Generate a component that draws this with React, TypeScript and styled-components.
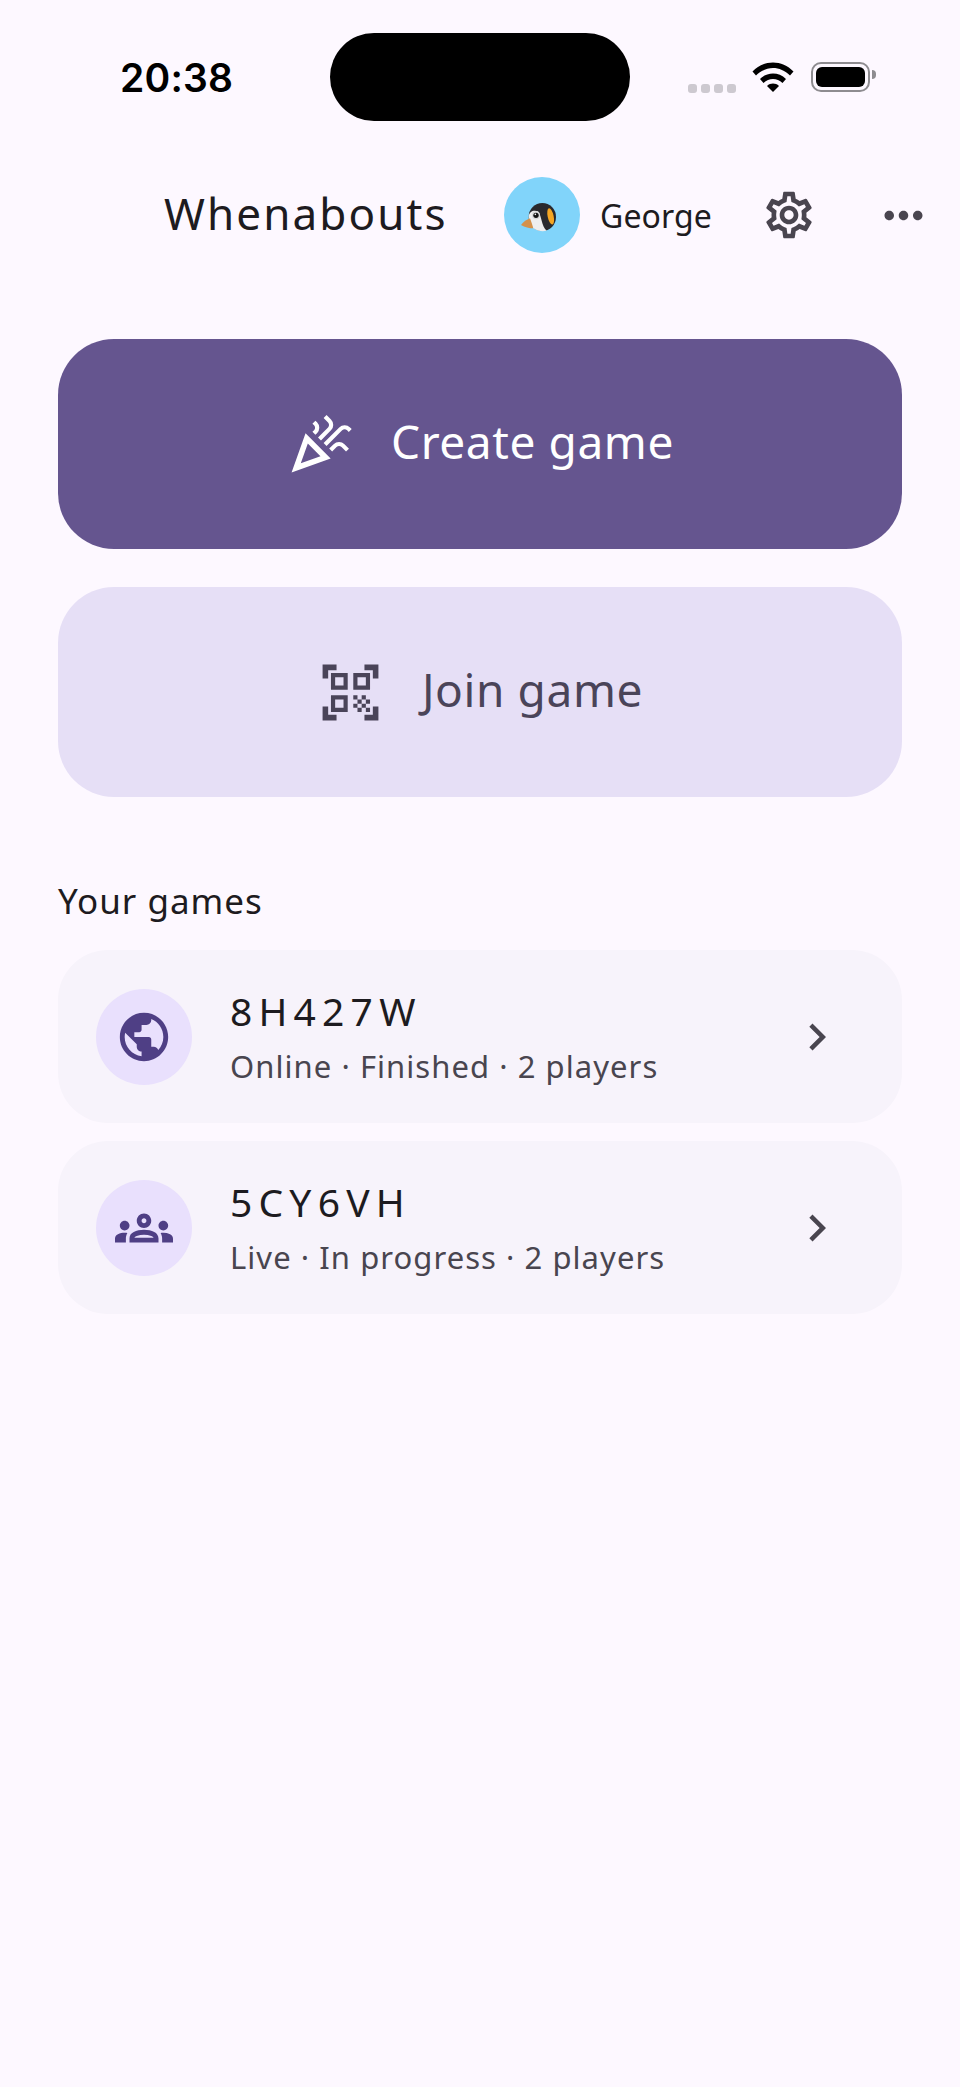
import React from "react";
import styled, { createGlobalStyle } from "styled-components";
import {
  MdOutlineCelebration,
  MdOutlineQrCodeScanner,
  MdPublic,
  MdOutlineGroups,
  MdChevronRight,
  MdMoreHoriz,
  MdOutlineSettings,
} from "react-icons/md";

const Global = createGlobalStyle`
  html, body { margin: 0; padding: 0; background: #fdf8ff; }
  * { box-sizing: border-box; }
`;

const Page = styled.div`
  width: 960px;
  height: 2087px;
  background: #fdf8ff;
  font-family: "Noto Sans", "Open Sans", sans-serif;
  color: #1d1b20;
  overflow: hidden;
`;

const StatusBar = styled.div`
  display: flex;
  align-items: center;
  height: 88px;
  margin-top: 33px;
`;

const TimeSlot = styled.div`
  width: 330px;
  padding-left: 120px;
  font-family: "Inter", "Liberation Sans", sans-serif;
  font-weight: 600;
  font-size: 39px;
  letter-spacing: 0.2px;
  color: #000;
`;

const Island = styled.div`
  width: 300px;
  height: 88px;
  border-radius: 44px;
  background: #000;
`;

const StatusIcons = styled.div`
  display: flex;
  align-items: center;
  padding-left: 58px;
`;

const SignalDots = styled.div`
  display: flex;
  gap: 4px;
  margin: 22px 16px 0 0;
`;

const SignalDot = styled.span`
  width: 9px;
  height: 9px;
  border-radius: 3px;
  background: #cdc9d0;
`;

const Battery = styled.div`
  position: relative;
  width: 59px;
  height: 30px;
  margin-left: 17px;
  padding: 3px;
  border: 2.5px solid #8e8c90;
  border-radius: 10px;
`;

const BatteryFill = styled.div`
  width: 100%;
  height: 100%;
  background: #000;
  border-radius: 6px;
`;

const BatteryCap = styled.span`
  position: absolute;
  right: -8px;
  top: 6px;
  width: 4px;
  height: 9px;
  background: #8e8c90;
  border-radius: 0 4px 4px 0;
`;

const Header = styled.header`
  display: flex;
  align-items: center;
  height: 76px;
  margin-top: 56px;
  padding-left: 164px;
`;

const Title = styled.h1`
  flex: none;
  margin: 0 0 4px;
  width: 340px;
  font-weight: 400;
  font-size: 44px;
  letter-spacing: 2.1px;
  color: #1d1b20;
`;

const Avatar = styled.div`
  flex: none;
  width: 76px;
  height: 76px;
  border-radius: 50%;
  background: #81d4fa;
  display: flex;
  align-items: center;
  justify-content: center;
`;

const PenguinArt = styled.svg`
  margin: 5px 7px 0 0;
`;

const UserName = styled.span`
  flex: none;
  width: 181px;
  padding-left: 20px;
  font-size: 32px;
  letter-spacing: 0.1px;
  color: #1d1b20;
`;

const HeaderIcon = styled.span<{ $gap?: number }>`
  flex: none;
  display: flex;
  margin-left: ${(p) => p.$gap ?? 0}px;
  color: #49454f;
`;

const Actions = styled.div`
  display: flex;
  flex-direction: column;
  gap: 38px;
  margin: 86px 58px 0;
`;

const ActionButton = styled.button<{ $primary?: boolean }>`
  display: flex;
  align-items: center;
  justify-content: center;
  gap: 38px;
  height: 210px;
  border: none;
  border-radius: 56px;
  background: ${(p) => (p.$primary ? "#65558f" : "#e6dff6")};
  color: ${(p) => (p.$primary ? "#fff" : "#4a4459")};
  font-family: "Noto Sans", sans-serif;
  font-size: 46px;
  letter-spacing: 0.6px;
`;

const ActionLabel = styled.span`
  margin-bottom: 6px;
`;

const SectionTitle = styled.h2`
  margin: 80px 58px 0;
  height: 48px;
  font-size: 35px;
  line-height: 48px;
  font-weight: 400;
  letter-spacing: 1px;
  color: #1d1b20;
`;

const GameList = styled.div`
  display: flex;
  flex-direction: column;
  gap: 18px;
  margin: 25px 58px 0;
`;

const GameCard = styled.div`
  display: flex;
  align-items: center;
  height: 173px;
  padding: 0 58px 0 38px;
  border-radius: 50px;
  background: #f7f3fb;
`;

const GameBadge = styled.div`
  display: flex;
  align-items: center;
  justify-content: center;
  flex: none;
  width: 96px;
  height: 96px;
  border-radius: 50%;
  background: #e9e0fd;
  color: #4f3f85;
`;

const GameInfo = styled.div`
  flex: 1;
  display: flex;
  flex-direction: column;
  gap: 9px;
  padding-left: 38px;
`;

const GameCode = styled.div`
  font-size: 39px;
  line-height: 50px;
  letter-spacing: 6.2px;
  color: #1d1b20;
`;

const GameMeta = styled.div`
  font-size: 31px;
  line-height: 42px;
  letter-spacing: 1.05px;
  color: #49454f;
`;

const Chevron = styled.span`
  display: flex;
  color: #49454f;
`;

const Wifi = () => (
  <svg width="42" height="30" viewBox="0 0 42 30" aria-hidden="true">
    <path d="M0.5 9.5C12 -2.5 30 -2.5 41.5 9.5L38 13.5C28 3.5 14 3.5 4 13.5Z" fill="#000" />
    <path d="M8 17C15.5 9.8 26.5 9.8 34 17L30.5 21C25 15.8 17 15.8 11.5 21Z" fill="#000" />
    <path d="M15 24C18.5 20.8 23.5 20.8 27 24L21 30Z" fill="#000" />
  </svg>
);

const Penguin = () => (
  <PenguinArt width="35" height="29" viewBox="93 100 105 87" aria-hidden="true">
    <ellipse cx="157" cy="142" rx="41" ry="42" fill="#29292d" />
    <path d="M116 140C118 126 130 120 144 125C156 140 154 170 170 183C150 188 126 180 118 160Z" fill="#eeeeee" />
    <circle cx="138" cy="137" r="12" fill="#d8d8d8" />
    <circle cx="138" cy="137" r="8" fill="#141414" />
    <circle cx="136" cy="134" r="2.5" fill="#ffffff" />
    <ellipse cx="182" cy="140" rx="9" ry="25" fill="#f5a623" transform="rotate(-12 182 140)" />
    <path d="M93 166C100 156 110 150 120 146C124 156 127 166 130 176C118 176 104 173 93 166Z" fill="#d4914a" />
  </PenguinArt>
);

const games = [
  { code: "8H427W", meta: "Online · Finished · 2 players", Icon: MdPublic },
  { code: "5CY6VH", meta: "Live · In progress · 2 players", Icon: MdOutlineGroups },
];

export default function App() {
  return (
    <Page>
      <Global />
      <StatusBar>
        <TimeSlot>20:38</TimeSlot>
        <Island />
        <StatusIcons>
          <SignalDots>
            <SignalDot />
            <SignalDot />
            <SignalDot />
            <SignalDot />
          </SignalDots>
          <Wifi />
          <Battery>
            <BatteryFill />
            <BatteryCap />
          </Battery>
        </StatusIcons>
      </StatusBar>
      <Header>
        <Title>Whenabouts</Title>
        <Avatar>
          <Penguin />
        </Avatar>
        <UserName>George</UserName>
        <HeaderIcon>
          <MdOutlineSettings size={56} />
        </HeaderIcon>
        <HeaderIcon $gap={58}>
          <MdMoreHoriz size={57} />
        </HeaderIcon>
      </Header>
      <Actions>
        <ActionButton $primary>
          <MdOutlineCelebration size={67} />
          <ActionLabel>Create game</ActionLabel>
        </ActionButton>
        <ActionButton>
          <MdOutlineQrCodeScanner size={67} />
          <ActionLabel>Join game</ActionLabel>
        </ActionButton>
      </Actions>
      <SectionTitle>Your games</SectionTitle>
      <GameList>
        {games.map(({ code, meta, Icon }) => (
          <GameCard key={code}>
            <GameBadge>
              <Icon size={58} />
            </GameBadge>
            <GameInfo>
              <GameCode>{code}</GameCode>
              <GameMeta>{meta}</GameMeta>
            </GameInfo>
            <Chevron>
              <MdChevronRight size={54} />
            </Chevron>
          </GameCard>
        ))}
      </GameList>
    </Page>
  );
}
